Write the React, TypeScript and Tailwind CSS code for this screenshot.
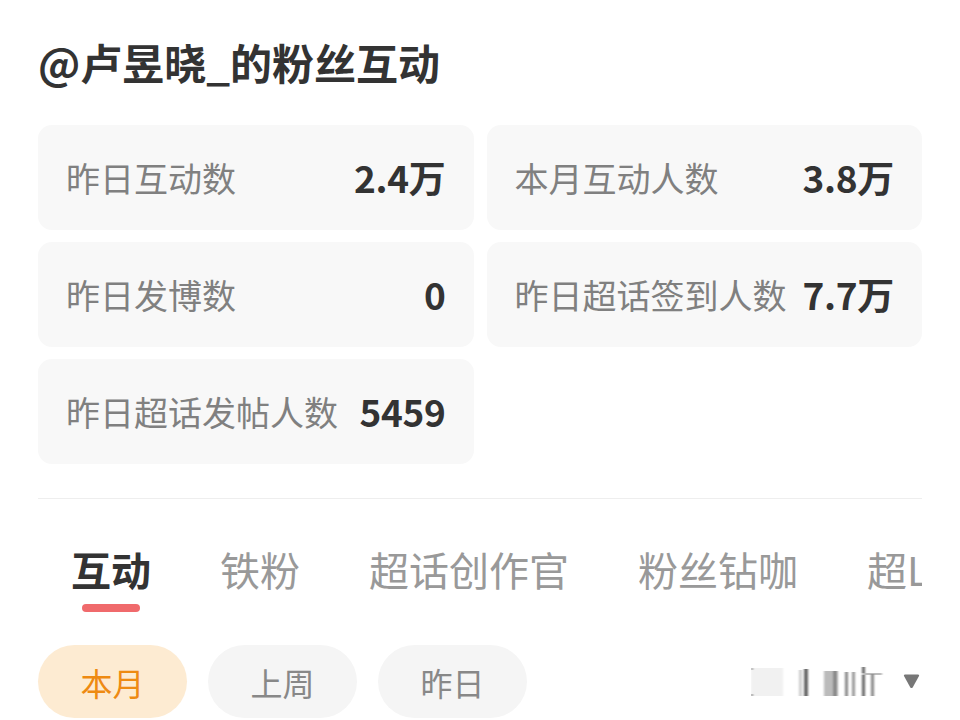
import React from "react";

const FONT = { fontFamily: '"Noto Sans CJK SC", "Noto Sans", sans-serif' };

const stats: { label: string; value: string }[] = [
  { label: "昨日互动数", value: "2.4万" },
  { label: "本月互动人数", value: "3.8万" },
  { label: "昨日发博数", value: "0" },
  { label: "昨日超话签到人数", value: "7.7万" },
  { label: "昨日超话发帖人数", value: "5459" },
];

const tabs = ["互动", "铁粉", "超话创作官", "粉丝钻咖", "超L"];
const ranges = ["本月", "上周", "昨日"];

function SortSmudge() {
  // the sort label is smeared in the capture; a few blurred strokes stand in for it
  return (
    <svg width="140" height="36" viewBox="0 0 140 36">
      <defs>
        <filter id="smear" x="-20%" y="-20%" width="140%" height="140%">
          <feGaussianBlur stdDeviation="1.2 0.6" />
        </filter>
      </defs>
      <g filter="url(#smear)">
        <rect x="0" y="4" width="32" height="28" fill="#f1f1f1" />
        <rect x="0" y="4" width="2" height="2" fill="#999" />
        <rect x="0" y="30" width="2" height="2" fill="#888" />
        <rect x="53" y="5" width="4" height="27" fill="#666" />
        <rect x="48" y="6" width="3" height="26" fill="#ccc" />
        <rect x="73" y="7" width="14" height="25" fill="#bbb" />
        <rect x="82" y="7" width="4" height="25" fill="#888" />
        <rect x="94" y="8" width="3" height="24" fill="#888" />
        <rect x="101" y="8" width="3" height="24" fill="#999" />
        <rect x="111" y="3" width="3" height="29" fill="#666" />
        <rect x="111" y="9" width="20" height="2" fill="#bbb" />
        <rect x="120" y="10" width="3" height="22" fill="#888" />
      </g>
    </svg>
  );
}

export default function App() {
  return (
    <div className="w-[960px] h-[720px] overflow-hidden bg-white px-[38px] pt-[38px]" style={FONT}>
      <h1 className="text-[42px] leading-[48px] font-bold text-[#333333]">@卢昱晓_的粉丝互动</h1>

      <div className="mt-[39px] grid grid-cols-2 gap-x-[13px] gap-y-[12px]">
        {stats.map((s) => (
          <div
            key={s.label}
            className="h-[105px] rounded-[14px] bg-[#f8f8f8] px-[28px] flex items-center justify-between"
          >
            <span className="text-[34px] text-[#808080] whitespace-nowrap">{s.label}</span>
            <span className="text-[37px] font-semibold text-[#333333] whitespace-nowrap tracking-[-0.3px]">
              {s.value}
            </span>
          </div>
        ))}
      </div>

      <div className="mt-[34px] border-t border-[#eeeeee]" />

      <div className="mt-[42px] flex gap-[69px] whitespace-nowrap overflow-x-clip">
        {tabs.map((t, i) => (
          <div key={t} className={`flex flex-col items-center shrink-0 ${i === 0 ? "ml-[33px]" : ""}`}>
            <span
              className={`text-[40px] leading-[56px] ${i === 0 ? "font-bold text-[#333333]" : "text-[#999999]"}`}
            >
              {t}
            </span>
            <div className={`mt-[7px] h-[8px] w-[58px] rounded-full ${i === 0 ? "bg-[#f06a6c]" : "bg-transparent"}`} />
          </div>
        ))}
      </div>

      <div className="mt-[33px] flex items-center">
        <div className="flex gap-[21px]">
          {ranges.map((r, i) => (
            <div
              key={r}
              className={`w-[149px] h-[73px] rounded-full flex items-center justify-center text-[32px] ${
                i === 0 ? "bg-[#fdebd2] text-[#ee8a12]" : "bg-[#f5f5f5] text-[#888888]"
              }`}
            >
              {r}
            </div>
          ))}
        </div>
        <div className="ml-auto flex items-center gap-[12px] mr-[2px]">
          <SortSmudge />
          <svg width="17" height="15" viewBox="0 0 17 15">
            <path d="M1 2 Q0.3 0.5 2 0.5 H15 Q16.7 0.5 16 2 L9.8 13.2 Q8.5 15 7.2 13.2 Z" fill="#777777" />
          </svg>
        </div>
      </div>
    </div>
  );
}
